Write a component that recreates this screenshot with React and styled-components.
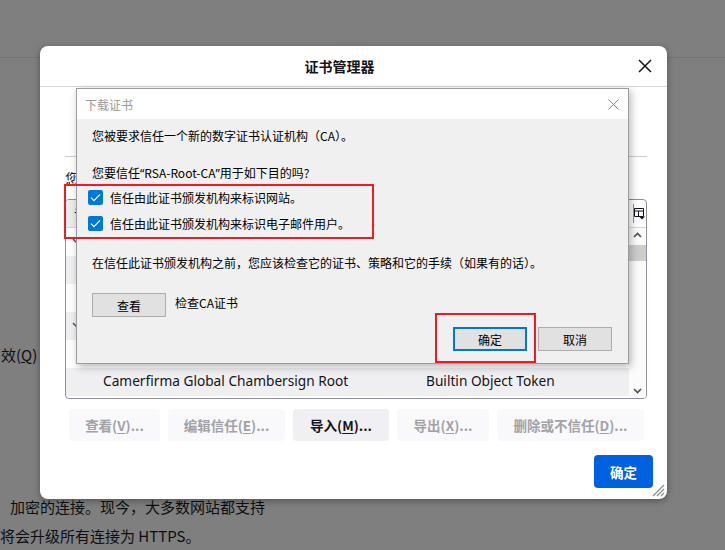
import React from 'react';
import styled, { createGlobalStyle } from 'styled-components';

const GlobalStyle = createGlobalStyle`
  html, body { margin: 0; padding: 0; }
  body {
    background: #7f7f7f;
    font-family: "Noto Sans", "Noto Sans CJK SC", sans-serif;
  }
  * { box-sizing: border-box; }
`;

const CJK = `"Noto Sans CJK SC", "Noto Sans", sans-serif`;
const LATIN = `"Noto Sans", "Noto Sans CJK SC", sans-serif`;

const Screen = styled.div`
  position: relative;
  width: 725px;
  height: 550px;
  overflow: hidden;
  background: #7f7f7f;
`;

/* ---------- dimmed settings page underneath ---------- */
const PageBehind = styled.div`
  display: flex;
  flex-direction: column;
  height: 100%;
  color: #0e0e11;
  font-family: ${CJK};
  font-size: 15px;
`;

const PageHeaderBar = styled.div`
  height: 58px;
  border-bottom: 1px solid #737373;
  flex: none;
`;

const PageOption = styled.div`
  margin-top: 287px;
  line-height: 20px;
  padding-left: 1px;
`;

const PageParagraph = styled.div`
  margin-top: 127px;
  line-height: 29px;
`;

const PageLine = styled.div`
  white-space: nowrap;
  padding-left: ${(p) => p.$indent}px;
`;

/* ---------- certificate manager dialog ---------- */
const Dialog = styled.section`
  position: absolute;
  left: 40px;
  top: 46px;
  width: 627px;
  height: 453px;
  background: #fff;
  border-radius: 8px;
  box-shadow: 0 2px 7px rgba(0, 0, 0, 0.35);
  display: flex;
  flex-direction: column;
  color: #15141a;
  font-family: ${LATIN};
`;

const DialogHeader = styled.header`
  height: 41px;
  flex: none;
  display: flex;
  align-items: center;
  padding-left: 10px;
  border-bottom: 1px solid #d7d7db;
`;

const DialogTitle = styled.h1`
  flex: 1;
  margin: 0;
  text-align: center;
  font-family: ${CJK};
  font-size: 14px;
  font-weight: 700;
  line-height: 20px;
`;

const CloseButton = styled.button`
  width: 32px;
  height: 32px;
  margin-right: 6px;
  padding: 0;
  border: none;
  background: none;
  display: grid;
  place-items: center;
`;

const DialogBody = styled.div`
  display: flex;
  flex-direction: column;
  padding: 0 20px 0 25px;
`;

const TabStrip = styled.div`
  height: 70px;
  border-bottom: 1px solid #cfcfd8;
`;

const Caption = styled.div`
  margin-top: 11px;
  font-family: ${CJK};
  font-size: 14px;
  line-height: 20px;
`;

const CertList = styled.div`
  margin-top: 11px;
  height: 200px;
  border: 1px solid #8f8f9d;
  border-radius: 4px;
  overflow: hidden;
  display: grid;
  grid-template-columns: 1fr 17px;
  grid-template-rows: 28px 1fr;
`;

const ListHead = styled.div`
  grid-column: 1 / -1;
  display: grid;
  grid-template-columns: 352px 1fr 14px;
  border-bottom: 1px solid #d7d7db;
  font-family: ${CJK};
  font-size: 13px;
`;

const HeadCell = styled.div`
  display: flex;
  align-items: center;
  padding-left: 8px;
  background: ${(p) => (p.$sorted ? '#ececee' : 'transparent')};
  white-space: nowrap;
  overflow: hidden;
`;

const ColumnPicker = styled.div`
  display: flex;
  align-items: center;
  justify-content: flex-end;
  padding-right: 1px;
  position: relative;
  &::before {
    content: '';
    position: absolute;
    left: 1px;
    top: 4px;
    bottom: 4px;
    width: 1px;
    background: #8f8f9d;
  }
`;

const Rows = styled.div`
  display: flex;
  flex-direction: column;
`;

const Row = styled.div`
  height: 28px;
  flex: none;
  display: grid;
  grid-template-columns: 352px 1fr;
  align-items: center;
  background: ${(p) => (p.$odd ? '#efeff1' : '#fff')};
  font-size: 13.7px;
  line-height: 18px;
  padding-bottom: 2px;
  white-space: nowrap;
`;

const NameCell = styled.div`
  display: flex;
  align-items: center;
  gap: 6px;
  padding-left: ${(p) => (p.$group ? 6 : 37)}px;
  overflow: hidden;
`;

const TokenCell = styled.div`
  padding-left: 8px;
  overflow: hidden;
`;

const Scrollbar = styled.div`
  display: flex;
  flex-direction: column;
  align-items: stretch;
  background: #fbfbfb;
`;

const ScrollArrow = styled.div`
  height: 13px;
  display: grid;
  place-items: center;
  margin-top: ${(p) => (p.$down ? 'auto' : '0')};
  margin-bottom: ${(p) => (p.$down ? '1px' : '0')};
`;

const ScrollThumb = styled.div`
  margin-top: 4px;
  height: 16px;
  background: #cdcdcd;
`;

const ButtonRow = styled.div`
  margin-top: 10px;
  padding-left: 4px;
  display: flex;
  gap: 8px;
`;

const ActionButton = styled.button`
  width: ${(p) => p.$w}px;
  height: 32px;
  padding: 0;
  border: none;
  border-radius: 4px;
  font-family: ${CJK};
  font-size: 13.5px;
  font-weight: 600;
  background: ${(p) => (p.disabled ? '#f9f9fb' : '#f0f0f4')};
  color: ${(p) => (p.disabled ? '#a2a2a6' : '#15141a')};
  white-space: nowrap;
  u { text-underline-offset: 2px; }
`;

const DialogFooter = styled.footer`
  margin-top: 14px;
  padding: 0 14px;
  display: flex;
  justify-content: flex-end;
`;

const PrimaryButton = styled.button`
  width: 59px;
  height: 33px;
  border: none;
  border-radius: 4px;
  background: #0061e0;
  color: #fff;
  font-family: ${CJK};
  font-size: 13.5px;
  font-weight: 600;
`;

const ResizeGrip = styled.svg`
  position: absolute;
  right: 2px;
  bottom: 2px;
`;

/* ---------- native "download certificate" window ---------- */
const NativeWindow = styled.div`
  position: absolute;
  left: 76px;
  top: 88px;
  width: 553px;
  height: 276px;
  border: 1px solid #9c9c9c;
  box-shadow: 2px 3px 8px rgba(0, 0, 0, 0.28);
  display: flex;
  flex-direction: column;
  font-family: ${CJK};
  font-size: 12px;
  color: #000;
`;

const NativeTitleBar = styled.div`
  height: 30px;
  flex: none;
  background: #fff;
  display: flex;
  align-items: center;
  padding-left: 8px;
  color: #9a9a9a;
`;

const NativeTitle = styled.span`
  flex: 1;
`;

const NativeClose = styled.div`
  width: 30px;
  height: 30px;
  display: grid;
  place-items: center;
`;

const NativeBody = styled.div`
  flex: 1;
  background: #f0f0f0;
  padding: 8px 16px 12px 15px;
  display: flex;
  flex-direction: column;
`;

const Line = styled.div`
  line-height: 17px;
  margin-top: ${(p) => p.$gap || 0}px;
  white-space: nowrap;
`;

const Quote = styled.span`
  font-family: ${LATIN};
`;

const CheckRow = styled.label`
  display: flex;
  align-items: center;
  gap: 7px;
  height: 18px;
  margin-left: -4px;
  margin-top: ${(p) => p.$gap}px;
`;

const CheckBox = styled.span`
  width: 15px;
  height: 15px;
  border-radius: 2px;
  background: #0078d7;
  display: grid;
  place-items: center;
`;

const ViewRow = styled.div`
  margin-top: 22px;
  display: flex;
  align-items: flex-start;
  gap: 9px;
`;

const ViewHint = styled.span`
  line-height: 17px;
  margin-top: 1px;
`;

const ActionRow = styled.div`
  margin-top: 10px;
  display: flex;
  justify-content: flex-end;
  gap: 11px;
`;

const WinButton = styled.button`
  width: 74px;
  height: 24px;
  padding: 0;
  background: #e1e1e1;
  border: ${(p) => (p.$default ? '2px solid #0078d7' : '1px solid #adadad')};
  font-family: ${CJK};
  font-size: 12px;
  color: #000;
`;

/* ---------- red call-out frames drawn on top ---------- */
const CallOut = styled.div`
  position: absolute;
  border: 2px solid #ec1c24;
  left: ${(p) => p.$x}px;
  top: ${(p) => p.$y}px;
  width: ${(p) => p.$w}px;
  height: ${(p) => p.$h}px;
`;

const Chevron = ({ up, color = '#4a4a4f' }) => (
  <svg width="9" height="6" viewBox="0 0 9 6">
    <path
      d={up ? 'M1 5L4.5 1.5L8 5' : 'M1 1L4.5 4.5L8 1'}
      stroke={color}
      strokeWidth="1.6"
      fill="none"
    />
  </svg>
);

const CheckMark = () => (
  <svg width="11" height="9" viewBox="0 0 11 9">
    <path d="M1 4.6L4 7.6L10 1.4" stroke="#fff" strokeWidth="1.2" fill="none" />
  </svg>
);

const rows = [
  { group: true, name: 'AC Camerfirma S.A.' },
  { name: '', token: '' },
  { name: '', token: '' },
  { group: true, name: '' },
  { name: '', token: '' },
  { name: 'Camerfirma Global Chambersign Root', token: 'Builtin Object Token' },
];

export default function App() {
  return (
    <Screen>
      <GlobalStyle />

      <PageBehind>
        <PageHeaderBar />
        <PageOption>
          效(<u>Q</u>)
        </PageOption>
        <PageParagraph>
          <PageLine $indent={10}>加密的连接。现今，大多数网站都支持</PageLine>
          <PageLine $indent={-7}>将会升级所有连接为 HTTPS。</PageLine>
        </PageParagraph>
      </PageBehind>

      <Dialog>
        <DialogHeader>
          <DialogTitle>证书管理器</DialogTitle>
          <CloseButton aria-label="关闭">
            <svg width="14" height="14" viewBox="0 0 14 14">
              <path d="M1 1L13 13M13 1L1 13" stroke="#15141a" strokeWidth="1.5" />
            </svg>
          </CloseButton>
        </DialogHeader>

        <DialogBody>
          <TabStrip />
          <Caption>您</Caption>
          <CertList>
            <ListHead>
              <HeadCell $sorted>证书</HeadCell>
              <HeadCell />
              <ColumnPicker>
                <svg width="11" height="13" viewBox="0 0 11 13">
                  <path d="M0.5 1.5h9v8h-9z M0.5 4h9 M4.5 4v5.5" stroke="#15141a" fill="none" />
                  <path d="M5 9.5h6l-3 3z" fill="#15141a" />
                </svg>
              </ColumnPicker>
            </ListHead>
            <Rows>
              {rows.map((r, i) => (
                <Row key={i} $odd={i % 2 === 1}>
                  <NameCell $group={r.group}>
                    {r.group && <Chevron color="#5b5b66" />}
                    {r.group ? null : r.name}
                  </NameCell>
                  <TokenCell>{r.token}</TokenCell>
                </Row>
              ))}
            </Rows>
            <Scrollbar>
              <ScrollArrow>
                <Chevron up />
              </ScrollArrow>
              <ScrollThumb />
              <ScrollArrow $down>
                <Chevron />
              </ScrollArrow>
            </Scrollbar>
          </CertList>

          <ButtonRow>
            <ActionButton disabled $w={91}>
              查看(<u>V</u>)...
            </ActionButton>
            <ActionButton disabled $w={117}>
              编辑信任(<u>E</u>)...
            </ActionButton>
            <ActionButton $w={96}>
              导入(<u>M</u>)...
            </ActionButton>
            <ActionButton disabled $w={92}>
              导出(<u>X</u>)...
            </ActionButton>
            <ActionButton disabled $w={147}>
              删除或不信任(<u>D</u>)...
            </ActionButton>
          </ButtonRow>
        </DialogBody>

        <DialogFooter>
          <PrimaryButton>确定</PrimaryButton>
        </DialogFooter>

        <ResizeGrip width="14" height="14" viewBox="0 0 14 14">
          <path d="M13 2L2 13M13 6L6 13M13 10L10 13" stroke="#8a8a8a" strokeWidth="1.2" />
        </ResizeGrip>
      </Dialog>

      <NativeWindow>
        <NativeTitleBar>
          <NativeTitle>下载证书</NativeTitle>
          <NativeClose>
            <svg width="11" height="11" viewBox="0 0 11 11">
              <path d="M0.5 0.5L10.5 10.5M10.5 0.5L0.5 10.5" stroke="#8a8a8a" strokeWidth="1" />
            </svg>
          </NativeClose>
        </NativeTitleBar>
        <NativeBody>
          <Line>您被要求信任一个新的数字证书认证机构（CA）。</Line>
          <Line $gap={20}>
            您要信任<Quote>“</Quote>RSA-Root-CA<Quote>”</Quote>用于如下目的吗?
          </Line>
          <CheckRow $gap={6}>
            <CheckBox>
              <CheckMark />
            </CheckBox>
            信任由此证书颁发机构来标识网站。
          </CheckRow>
          <CheckRow $gap={8}>
            <CheckBox>
              <CheckMark />
            </CheckBox>
            信任由此证书颁发机构来标识电子邮件用户。
          </CheckRow>
          <Line $gap={22}>在信任此证书颁发机构之前，您应该检查它的证书、策略和它的手续（如果有的话）。</Line>
          <ViewRow>
            <WinButton>查看</WinButton>
            <ViewHint>检查CA证书</ViewHint>
          </ViewRow>
          <ActionRow>
            <WinButton $default>确定</WinButton>
            <WinButton>取消</WinButton>
          </ActionRow>
        </NativeBody>
      </NativeWindow>

      <CallOut $x={64} $y={184} $w={310} $h={55} />
      <CallOut $x={435} $y={313} $w={101} $h={50} />
    </Screen>
  );
}
